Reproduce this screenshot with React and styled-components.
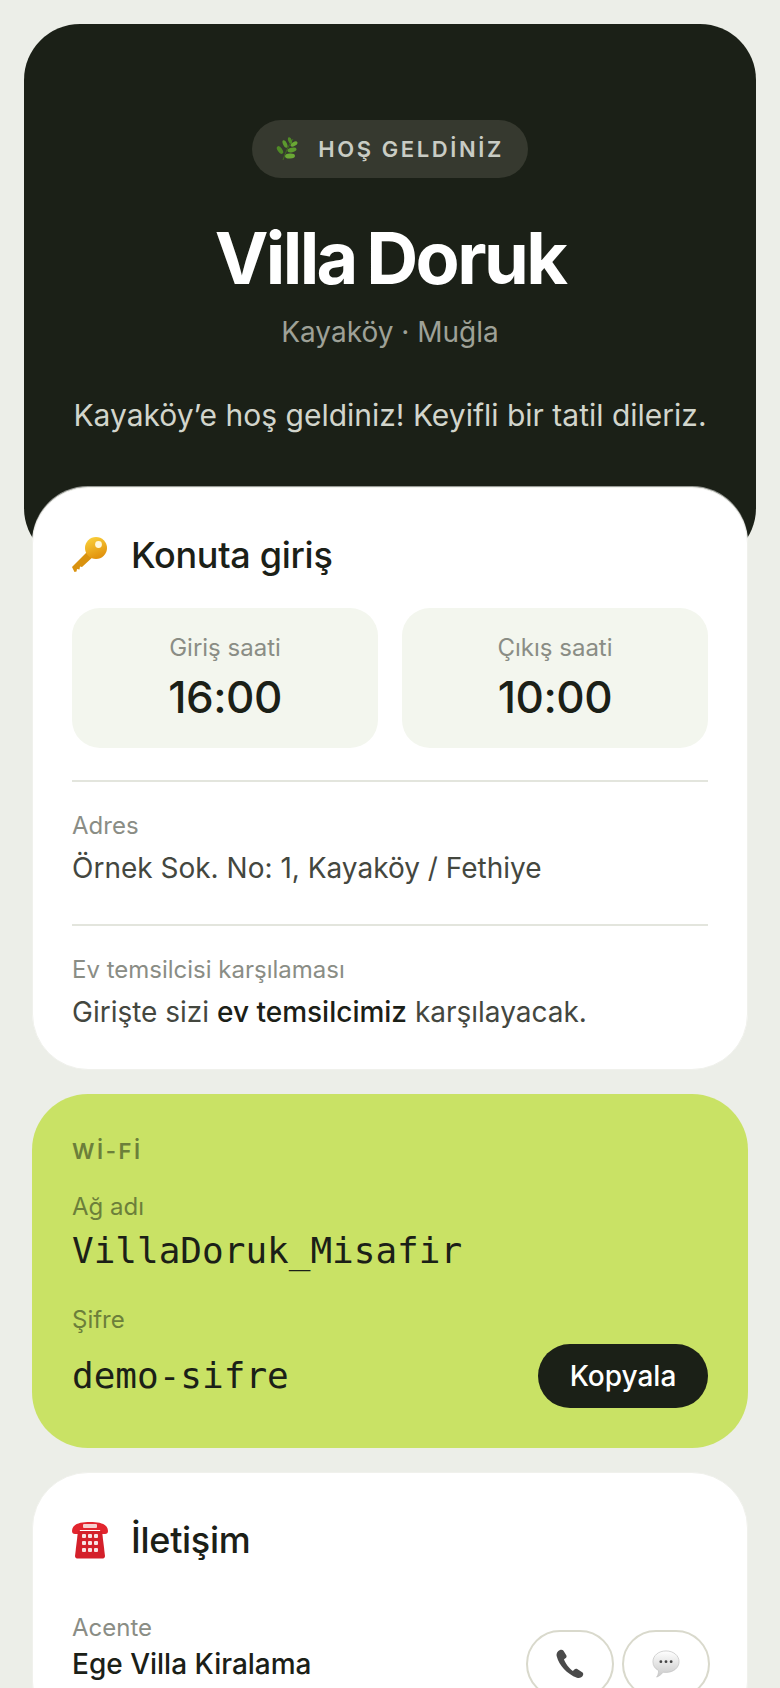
import styled, { createGlobalStyle } from "styled-components";

const INK = "#1b2017";

function HerbIcon() {
  return (
    <svg width="22" height="24" viewBox="0 0 22 24">
      <path d="M7 23C9 17 12 9 17 2" stroke="#3f6f1e" strokeWidth="1" fill="none" />
      <ellipse cx="4" cy="13" rx="4.400" ry="2.300" transform="rotate(55 4 13)" fill="#4f8a26" />
      <ellipse cx="9" cy="7" rx="4" ry="2" transform="rotate(65 9 7)" fill="#5c9a2e" />
      <ellipse cx="14" cy="3.500" rx="3.400" ry="1.800" transform="rotate(70 14 3.500)" fill="#4f8a26" />
      <ellipse cx="14" cy="19" rx="5" ry="2.600" transform="rotate(-3 14 19)" fill="#6aa835" />
      <ellipse cx="16" cy="13" rx="4.600" ry="2.200" transform="rotate(-12 16 13)" fill="#5c9a2e" />
      <ellipse cx="18" cy="7" rx="3.800" ry="2" transform="rotate(-28 18 7)" fill="#6aa835" />
    </svg>
  );
}

function KeyIcon() {
  return (
    <svg width="38" height="36" viewBox="2 0 38 36">
      <defs>
        <linearGradient id="keyGold" x1="0" y1="0" x2="0.4" y2="1">
          <stop offset="0" stopColor="#fcd53f" />
          <stop offset="1" stopColor="#e2940f" />
        </linearGradient>
      </defs>
      <path d="M2 30L20 12l5 6L12 30l-2-.5-.5 3-2.500-.5-.5 2.500-2 .5z" fill="#d9920f" />
      <circle cx="26" cy="11" r="11" fill="url(#keyGold)" />
      <circle cx="28.500" cy="7.500" r="3.400" fill="#fff8dc" />
    </svg>
  );
}

function TelephoneIcon() {
  return (
    <svg width="38" height="38" viewBox="1 0 38 38">
      <path d="M1 10C1 3 9 1 19 1s18 2 18 9c0 2-1 3-3 3h-4l-1-4H9l-1 4H4c-2 0-3-1-3-3z" fill="#e2252e" />
      <path d="M7 10h24l3 25c0 1.500-1 2.500-2 2.500H6c-1 0-2-1-2-2.500z" fill="#d4202a" />
      <rect x="12" y="3" width="14" height="4" rx="1" fill="#f6d0d0" />
      <g fill="#f8e4e4">
        <rect x="11" y="13" width="4" height="4" rx="1" />
        <rect x="17" y="13" width="4" height="4" rx="1" />
        <rect x="23" y="13" width="4" height="4" rx="1" />
        <rect x="11" y="20" width="4" height="4" rx="1" />
        <rect x="17" y="20" width="4" height="4" rx="1" />
        <rect x="23" y="20" width="4" height="4" rx="1" />
        <rect x="11" y="27" width="4" height="4" rx="1" />
        <rect x="17" y="27" width="4" height="4" rx="1" />
        <rect x="23" y="27" width="4" height="4" rx="1" />
      </g>
    </svg>
  );
}

function ReceiverIcon() {
  return (
    <svg width="28" height="30" viewBox="0 0 28 30">
      <path
        d="M4 1C1.500 2 0 4.500.800 7.500 3 16 11 25 21 28.800c2.500.9 5-.4 6-2.500.5-1.200.2-2.300-.8-3l-5-3.300c-1-.6-2-.4-2.800.4l-1.500 1.500C13.500 19.800 9 14 8 10.300l1.800-1.300c.8-.7 1-1.700.6-2.600L7.500 1.800C6.800.8 5.400.4 4 1z"
        fill="#4a4a4a"
      />
    </svg>
  );
}

function BalloonIcon() {
  return (
    <svg width="28" height="28" viewBox="0 0 30 30">
      <defs>
        <linearGradient id="balloon" x1="0" y1="0" x2="0" y2="1">
          <stop offset="0" stopColor="#ffffff" />
          <stop offset="1" stopColor="#c9c9c9" />
        </linearGradient>
      </defs>
      <path d="M15 1c8 0 14 5 14 11.500S23 24 15 24c-1 0-2 0-3-.2C10 26 8 28 5 29c1.500-2 2-4 2-7C3 20 1 16.500 1 12.500 1 6 7 1 15 1z" fill="url(#balloon)" stroke="#c4c4c4" strokeWidth="0.8" />
      <circle cx="9.500" cy="12.500" r="1.500" fill="#444" />
      <circle cx="15" cy="12.500" r="1.500" fill="#444" />
      <circle cx="20.500" cy="12.500" r="1.500" fill="#444" />
    </svg>
  );
}

export default function App() {
  return (
    <>
      <GlobalStyle />
      <Page lang="tr">
        <Hero>
          <Pill>
            <HerbIcon />
            <PillText>HOŞ GELDİNİZ</PillText>
          </Pill>
          <VillaName>Villa Doruk</VillaName>
          <Location>Kayaköy · Muğla</Location>
          <Tagline>Kayaköy’e hoş geldiniz! Keyifli bir tatil dileriz.</Tagline>
        </Hero>

        <EntryCard>
          <CardTitle>
            <KeyIcon />
            <span>Konuta giriş</span>
          </CardTitle>
          <TimeGrid>
            <TimeTile>
              <TimeLabel>Giriş saati</TimeLabel>
              <TimeValue>16:00</TimeValue>
            </TimeTile>
            <TimeTile>
              <TimeLabel>Çıkış saati</TimeLabel>
              <TimeValue>10:00</TimeValue>
            </TimeTile>
          </TimeGrid>
          <InfoBlock>
            <InfoLabel>Adres</InfoLabel>
            <InfoValue>Örnek Sok. No: 1, Kayaköy / Fethiye</InfoValue>
          </InfoBlock>
          <InfoBlock>
            <InfoLabel>Ev temsilcisi karşılaması</InfoLabel>
            <InfoValue>
              Girişte sizi <strong>ev temsilcimiz</strong> karşılayacak.
            </InfoValue>
          </InfoBlock>
        </EntryCard>

        <WifiCard>
          <WifiTitle>Wİ-Fİ</WifiTitle>
          <WifiLabel>Ağ adı</WifiLabel>
          <MonoValue>VillaDoruk_Misafir</MonoValue>
          <WifiLabel $spaced>Şifre</WifiLabel>
          <PasswordRow>
            <MonoValue $flat>demo-sifre</MonoValue>
            <CopyButton>Kopyala</CopyButton>
          </PasswordRow>
        </WifiCard>

        <ContactCard>
          <CardTitle>
            <TelephoneIcon />
            <span>İletişim</span>
          </CardTitle>
          <ContactRow>
            <div>
              <InfoLabel>Acente</InfoLabel>
              <ContactName>Ege Villa Kiralama</ContactName>
            </div>
            <ContactActions>
              <RoundButton>
                <ReceiverIcon />
              </RoundButton>
              <RoundButton>
                <BalloonIcon />
              </RoundButton>
            </ContactActions>
          </ContactRow>
        </ContactCard>
      </Page>
    </>
  );
}

const GlobalStyle = createGlobalStyle`
  html, body {
    margin: 0;
    padding: 0;
    background: #eceee8;
  }
  * {
    box-sizing: border-box;
  }
`;

const Page = styled.div`
  height: 1688px;
  overflow: hidden;
  padding: 24px;
  font-family: Inter, "Liberation Sans", sans-serif;
  color: ${INK};
`;

const Hero = styled.header`
  height: 540px;
  padding-top: 96px;
  border-radius: 56px;
  background: ${INK};
  display: flex;
  flex-direction: column;
  align-items: center;
`;

const Pill = styled.div`
  height: 58px;
  padding: 0 24px;
  border-radius: 29px;
  background: #36392f;
  display: flex;
  align-items: center;
  gap: 20px;
`;

const PillText = styled.span`
  font-size: 22px;
  font-weight: 600;
  letter-spacing: 2.6px;
  color: #c9ccc4;
`;

const VillaName = styled.h1`
  margin: 37px 0 0;
  font-size: 72px;
  line-height: 86px;
  font-weight: 700;
  letter-spacing: -2.6px;
  word-spacing: -4px;
  color: #fff;
`;

const Location = styled.div`
  margin-top: 11px;
  font-size: 28px;
  line-height: 40px;
  color: #9ea197;
`;

const Tagline = styled.p`
  margin: 41px 0 0;
  font-size: 30px;
  line-height: 44px;
  color: #d2d5cc;
`;

const Card = styled.section`
  margin: 0 8px;
  padding: 41px 39px 39px;
  border-radius: 56px;
  background: #fff;
  border: 1px solid #f0f1ec;
`;

const EntryCard = styled(Card)`
  margin-top: -77px;
  position: relative;
  height: 583px;
  box-shadow: 0 -1px 0 rgba(255, 255, 255, 0.55);
`;

const CardTitle = styled.h2`
  margin: 0;
  display: flex;
  align-items: center;
  gap: 21px;
  font-size: 36px;
  line-height: 52px;
  font-weight: 500;
  letter-spacing: -0.3px;
`;

const TimeGrid = styled.div`
  margin-top: 27px;
  display: grid;
  grid-template-columns: 1fr 1fr;
  gap: 24px;
`;

const TimeTile = styled.div`
  height: 140px;
  padding-top: 24px;
  border-radius: 28px;
  background: #f3f6ee;
  text-align: center;
`;

const TimeLabel = styled.div`
  font-size: 24px;
  line-height: 32px;
  color: #8a8d85;
`;

const TimeValue = styled.div`
  margin-top: 5px;
  font-size: 44px;
  line-height: 56px;
  font-weight: 500;
  letter-spacing: -0.5px;
`;

const InfoBlock = styled.div`
  margin-top: 32px;
  padding-top: 28px;
  border-top: 2px solid #e3e5dd;

  & + & {
    margin-top: 33px;
  }
`;

const InfoLabel = styled.div`
  font-size: 24px;
  line-height: 32px;
  color: #8a8d85;
`;

const InfoValue = styled.div`
  margin-top: 4px;
  font-size: 28px;
  line-height: 45px;
  color: #44473f;

  strong {
    font-weight: 500;
    color: ${INK};
  }
`;

const WifiCard = styled.section`
  margin: 24px 8px 0;
  height: 354px;
  padding: 41px 40px 40px;
  border-radius: 56px;
  background: #c9e265;
`;

const WifiTitle = styled.div`
  font-size: 22px;
  line-height: 32px;
  font-weight: 600;
  letter-spacing: 2.6px;
  color: #6c7f3a;
`;

const WifiLabel = styled.div`
  margin-top: ${(p) => (p.$spaced ? "28px" : "24px")};
  font-size: 24px;
  line-height: 32px;
  color: #6c7f3a;
`;

const MonoValue = styled.div`
  margin-top: ${(p) => (p.$flat ? "0" : "3px")};
  font-family: "DejaVu Sans Mono", monospace;
  font-size: 36px;
  line-height: 50px;
`;

const PasswordRow = styled.div`
  margin-top: 8px;
  display: flex;
  align-items: center;
  justify-content: space-between;
`;

const CopyButton = styled.button`
  width: 170px;
  height: 64px;
  border: 0;
  border-radius: 32px;
  background: ${INK};
  color: #fff;
  font-family: inherit;
  font-size: 28px;
  font-weight: 500;
`;

const ContactCard = styled(Card)`
  margin-top: 24px;
`;

const ContactRow = styled.div`
  margin-top: 46px;
  display: flex;
  align-items: flex-start;
  justify-content: space-between;
`;

const ContactName = styled.div`
  font-size: 28px;
  line-height: 40px;
  font-weight: 500;
`;

const ContactActions = styled.div`
  margin: 18px -2px 0 0;
  display: flex;
  gap: 8px;
`;

const RoundButton = styled.button`
  width: 88px;
  height: 68px;
  padding: 0;
  border: 2px solid #d9d9cc;
  border-radius: 34px;
  background: #fff;
  display: flex;
  align-items: center;
  justify-content: center;
`;
